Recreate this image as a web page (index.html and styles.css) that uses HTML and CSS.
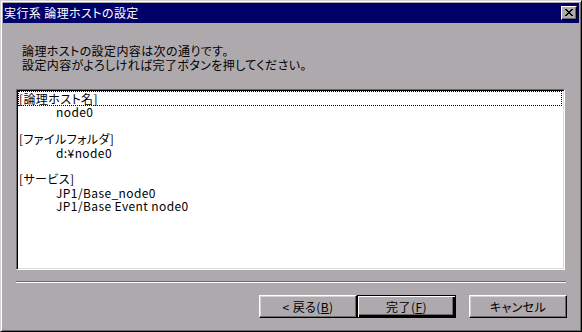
FILE: index.html
```html
<!DOCTYPE html>
<html lang="ja">
<head>
  <meta charset="UTF-8" />
  <title>実行系 論理ホストの設定</title>
  <link rel="stylesheet" href="styles.css">
</head>
<body>
  <div class="window">
    <div class="titlebar">
      <span class="title">実行系 論理ホストの設定</span>
      <span class="close">
        <svg width="8" height="7" viewBox="0 0 8 7">
          <path d="M0 0h2v1h1v1h2v-1h1v-1h2v1h-1v1h-1v1h-1v1h1v1h1v1h1v1h-2v-1h-1v-1h-2v1h-1v1h-2v-1h1v-1h1v-1h1v-1h-1v-1h-1v-1h-1z" fill="#000"/>
        </svg>
      </span>
    </div>

    <div class="content">
      <p class="message">論理ホストの設定内容は次の通りです。<br>設定内容がよろしければ完了ボタンを押してください。</p>

      <div class="listbox">
        <div class="item focus">[論理ホスト名]</div>
        <div class="item sub">node0</div>
        <div class="item"></div>
        <div class="item">[ファイルフォルダ]</div>
        <div class="item sub">d:¥node0</div>
        <div class="item"></div>
        <div class="item">[サービス]</div>
        <div class="item sub">JP1/Base_node0</div>
        <div class="item sub">JP1/Base Event node0</div>
      </div>

      <div class="separator"></div>

      <div class="buttons">
        <button class="btn">&lt; 戻る(<u>B</u>)</button>
        <button class="btn default">完了(<u>F</u>)</button>
        <button class="btn cancel">キャンセル</button>
      </div>
    </div>
  </div>
</body>
</html>
```

FILE: styles.css
```css
body {
  margin: 0;
  background: #ada9ad;
  font-family: "Noto Sans CJK JP", sans-serif;
  font-size: 12px;
  font-feature-settings: "palt";
  letter-spacing: 0.4px;
  color: #000;
}

.window {
  width: 582px;
  height: 332px;
  box-sizing: border-box;
  background: #ada9ad;
  border: 1px solid;
  border-color: #d6d3d6 #000 #000 #d6d3d6;
  box-shadow: inset 1px 1px #fff, inset -1px -1px #6b696b;
  padding: 2px;
  display: flex;
  flex-direction: column;
}

.titlebar {
  height: 20px;
  background: #000066;
  color: #fff;
  display: flex;
  align-items: center;
  justify-content: space-between;
  padding-left: 1px;
}

.title {
  line-height: 20px;
}

.close {
  width: 16px;
  height: 14px;
  box-sizing: border-box;
  margin-right: 2px;
  background: #ada9ad;
  border: 1px solid;
  border-color: #fff #000 #000 #fff;
  box-shadow: inset -1px -1px #6b696b;
  display: flex;
  align-items: center;
  justify-content: center;
}

.close svg {
  display: block;
  margin: 0 1px 1px 0;
}

.content {
  padding: 21px 12px 0 13px;
}

.message {
  margin: 0 0 17px 6px;
  line-height: 14px;
}

.listbox {
  width: 549px;
  height: 181px;
  box-sizing: border-box;
  background: #fff;
  border: 1px solid;
  border-color: #6b696b #fff #fff #6b696b;
  box-shadow: inset 1px 1px #000, inset -1px -1px #dedbde;
  padding: 2px 3px 0 2px;
}

.item {
  height: 13.4px;
  line-height: 13px;
  white-space: nowrap;
}

.item.sub {
  padding-left: 37px;
}

.item.focus {
  outline: 1px dotted #000;
  outline-offset: 0;
}

.separator {
  width: 550px;
  margin-top: 11px;
  border-top: 1px solid #6b696b;
  border-bottom: 1px solid #fff;
}

.buttons {
  display: flex;
  justify-content: flex-end;
  margin-top: 12px;
}

.btn {
  width: 98px;
  height: 23px;
  box-sizing: border-box;
  padding: 0;
  font: inherit;
  letter-spacing: inherit;
  color: #000;
  background: #ada9ad;
  border: 1px solid;
  border-color: #fff #000 #000 #fff;
  box-shadow: inset -1px -1px #6b696b, inset 1px 1px #d6d3d6;
}

.btn.default {
  width: 99px;
  border-color: #000;
  box-shadow: inset 1px 1px #fff, inset -2px -2px #000, inset -3px -3px #6b696b;
}

.btn.cancel {
  margin-left: 13px;
}
```
